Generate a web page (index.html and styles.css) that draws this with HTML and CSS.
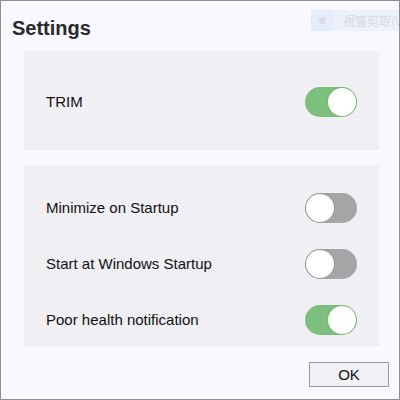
FILE: index.html
```html
<!DOCTYPE html>
<html>
<head>
<meta charset="utf-8">
<link rel="stylesheet" href="styles.css">
</head>
<body>
<div class="window">
  <div class="ghost"><span class="ghost-icon"><span class="ghost-dot"></span></span><span class="ghost-text">視窗剪取(V)</span></div>
  <h1 class="title">Settings</h1>
  <div class="panel panel-trim">
    <div class="row"><span class="label">TRIM</span><span class="toggle on"><span class="knob"></span></span></div>
  </div>
  <div class="panel panel-list">
    <div class="row"><span class="label">Minimize on Startup</span><span class="toggle"><span class="knob"></span></span></div>
    <div class="row"><span class="label">Start at Windows Startup</span><span class="toggle"><span class="knob"></span></span></div>
    <div class="row"><span class="label">Poor health notification</span><span class="toggle on"><span class="knob"></span></span></div>
  </div>
  <div class="footer"><button class="ok">OK</button></div>
</div>
</body>
</html>
```
FILE: styles.css
```css
html, body { margin: 0; padding: 0; }
body { font-family: "Liberation Sans", Arial, sans-serif; color: #1a1a1a; background: #f8f8fe; }
.window {
  position: relative;
  width: 400px; height: 400px;
  box-sizing: border-box;
  border: 1px solid #8e8e93;
  background: #f8f8fe;
  overflow: hidden;
}
.title {
  margin: 15px 0 0 11px;
  font-size: 20px; line-height: 24px; font-weight: bold;
  color: #2a2a2a;
}
.ghost {
  position: absolute; top: 9px; left: 310px;
  width: 120px; height: 21px;
  display: flex; align-items: center;
  background: #ecf2fc;
}
.ghost-icon {
  width: 22px; height: 21px; background: #e3edfb;
  display: flex; align-items: center; justify-content: center;
}
.ghost-dot { width: 7px; height: 7px; border-radius: 50%; background: #dcdcdf; }
.ghost-text {
  margin-left: 10px;
  font-family: "Noto Sans CJK TC", "Noto Sans CJK SC", sans-serif;
  font-size: 12px; line-height: 20px; color: #d9d9dd;
  white-space: nowrap;
}
.panel {
  width: 355px; margin-left: 23px;
  background: #efeff4;
  box-sizing: border-box;
  padding: 0 22px;
}
.panel-trim { margin-top: 11px; padding-top: 36px; padding-bottom: 33px; }
.panel-list {
  margin-top: 15px; padding-top: 28px; padding-bottom: 11px;
  display: flex; flex-direction: column; gap: 26px;
}
.row { display: flex; align-items: center; justify-content: space-between; height: 30px; }
.label { font-size: 15px; line-height: 18px; color: #111; }
.toggle {
  width: 52px; height: 30px; border-radius: 15px;
  background: #a5a5a7;
  display: flex; align-items: center; padding: 0 1px;
  box-sizing: border-box;
}
.toggle.on { background: #7dbf7c; justify-content: flex-end; }
.knob {
  width: 28px; height: 28px; border-radius: 50%;
  background: #fff;
  box-shadow: 0 0 0 1px rgba(0,0,0,0.12);
}
.toggle.on .knob { box-shadow: 0 0 0 1px rgba(60,120,60,0.15); }
.footer { display: flex; justify-content: flex-end; padding: 16px 10px 0 0; }
.ok {
  width: 80px; height: 25px;
  border: 1px solid #9a9a9e;
  background: #f1f1f6;
  font-family: "Liberation Sans", Arial, sans-serif;
  font-size: 15px; color: #111; padding: 0;
}
```
